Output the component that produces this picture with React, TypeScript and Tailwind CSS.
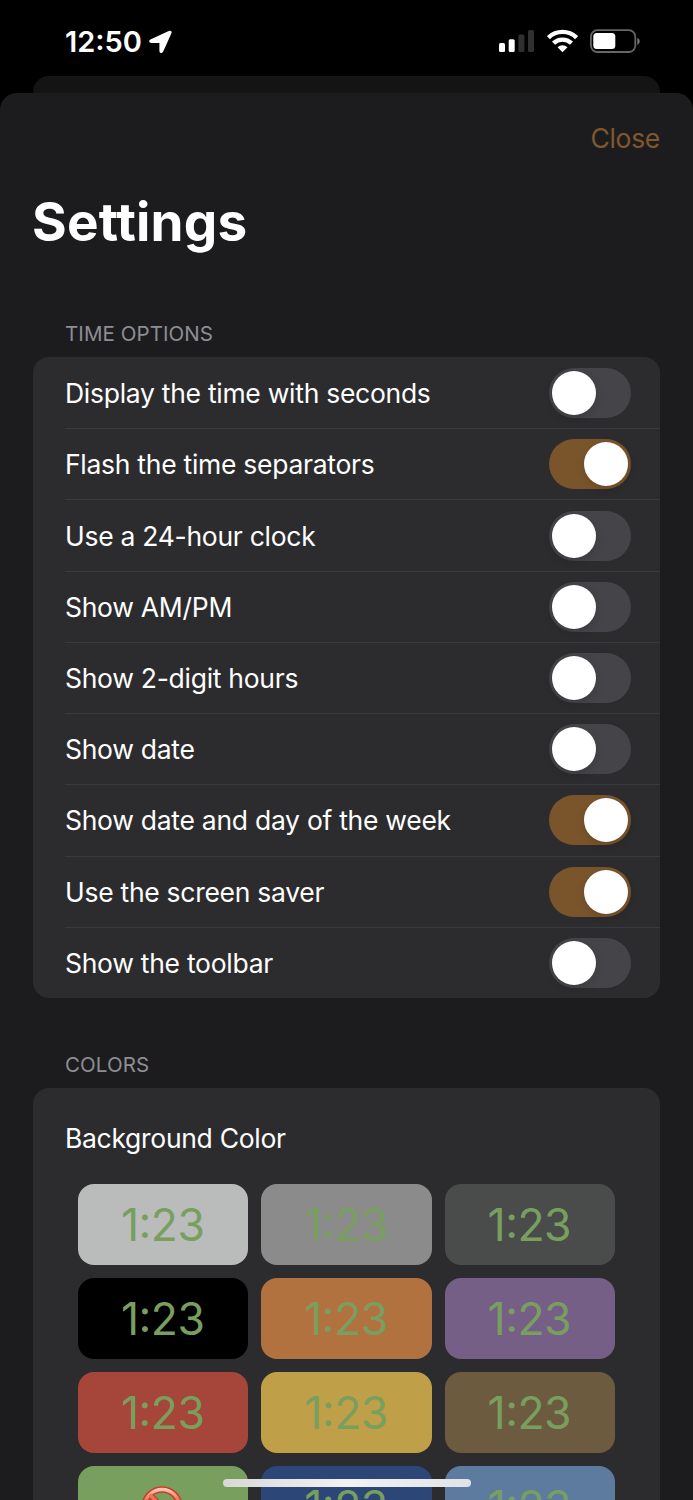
import React from 'react';

const timeOptions = [
  { label: 'Display the time with seconds', on: false },
  { label: 'Flash the time separators', on: true },
  { label: 'Use a 24-hour clock', on: false },
  { label: 'Show AM/PM', on: false },
  { label: 'Show 2-digit hours', on: false },
  { label: 'Show date', on: false },
  { label: 'Show date and day of the week', on: true },
  { label: 'Use the screen saver', on: true },
  { label: 'Show the toolbar', on: false },
];

const swatches = [
  { name: 'silver', color: 'bg-[#babcbb]' },
  { name: 'gray', color: 'bg-[#8b8b8b]' },
  { name: 'graphite', color: 'bg-[#4a4c4b]' },
  { name: 'black', color: 'bg-black' },
  { name: 'orange', color: 'bg-[#b2723f]' },
  { name: 'purple', color: 'bg-[#755f86]' },
  { name: 'red', color: 'bg-[#a64539]' },
  { name: 'yellow', color: 'bg-[#bfa048]' },
  { name: 'brown', color: 'bg-[#6d5b3f]' },
  { name: 'green', color: 'bg-[#799f5f]', disabled: true },
  { name: 'navy', color: 'bg-[#2c4677]' },
  { name: 'blue', color: 'bg-[#5d7b9f]' },
];

function StatusBar() {
  return (
    <div className="flex h-[76px] shrink-0 items-start justify-between pl-[65px] pr-[53px]">
      <div className="flex items-center pt-[24px]">
        <span className="w-[83px] text-[29px] font-semibold leading-[36px] text-white">
          12<span className="inline-block -translate-y-[2px]">:</span>50
        </span>
        <svg width="26" height="26" viewBox="0 0 26 26" className="mt-[-1px]">
          <path
            d="M21.600 2.600 2.700 11.200c-1.200.6-1 2 .4 2h8.300c.5 0 .8.300.8.800v7.900c0 1.500 1.700 1.800 2.300.4L22.700 4c.400-1-.100-1.800-1.100-1.400Z"
            fill="white"
            stroke="white"
            strokeWidth="1.6"
            strokeLinejoin="round"
          />
        </svg>
      </div>
      <div className="flex items-center gap-[12px] pt-[28px]">
        {/* Cellular signal */}
        <svg width="36" height="26" viewBox="0 0 36 26">
          <rect x="0" y="15" width="6" height="9" rx="1.5" fill="white" />
          <rect x="9.700" y="11.300" width="6" height="12.700" rx="1.500" fill="white" />
          <rect x="19.400" y="6.500" width="6" height="17.500" rx="1.500" fill="#303030" />
          <rect x="29" y="2" width="6" height="22" rx="1.5" fill="#303030" />
        </svg>
        {/* Wi-Fi */}
        <svg width="31" height="26" viewBox="0 0 31 26" fill="none" stroke="white" strokeWidth="4.4">
          <path d="M1.400 9.600a20.300 20.300 0 0 1 28.200 0" />
          <path d="M6.500 15.200a13 13 0 0 1 18 0" />
          <path d="M15.500 24.200 10.500 19.200a7.200 7.200 0 0 1 10 0Z" fill="white" stroke="none" />
        </svg>
        {/* Battery */}
        <svg width="50" height="26" viewBox="0 0 50 26">
          <rect x="0.900" y="2.200" width="44.400" height="21.800" rx="6.500" fill="none" stroke="#666" strokeWidth="1.800" />
          <rect x="3.300" y="4.900" width="22" height="16.200" rx="3.500" fill="white" />
          <path d="M47.300 9.700c3.200 1.400 3.200 5.800 0 7.200Z" fill="#777" />
        </svg>
      </div>
    </div>
  );
}

function Toggle({ on }: { on: boolean }) {
  return (
    <div
      className={
        on
          ? 'flex h-[50px] w-[82px] items-center justify-end rounded-full bg-[#7a552c] px-[3px]'
          : 'flex h-[50px] w-[82px] items-center rounded-full bg-[#454449] px-[3px]'
      }
    >
      <div className="h-[44px] w-[44px] rounded-full bg-white shadow-[0_3px_8px_rgba(0,0,0,0.15)]" />
    </div>
  );
}

function SectionTitle({ children }: { children: React.ReactNode }) {
  return (
    <h2 className="pl-[32px] text-[20.5px] leading-[28px] tracking-[0.08px] text-[#8e8e93]">{children}</h2>
  );
}

export default function App() {
  return (
    <div className="relative flex h-[1500px] w-[693px] flex-col overflow-hidden bg-black font-['Inter',sans-serif] text-white">
      <StatusBar />

      {/* Edge of the screen behind the sheet */}
      <div className="mx-[33px] h-[17px] shrink-0 rounded-t-[16px] bg-[#141414]" />

      <main className="flex flex-1 flex-col rounded-t-[17px] bg-[#1c1c1e] px-[33px]">
        <div className="flex justify-end pt-[27px]">
          <button className="text-[26.5px] leading-[36px] tracking-[-0.3px] text-[#7f582f]">Close</button>
        </div>

        <h1 className="mt-[32px] ml-[-1px] text-[53px] font-bold leading-[68px] tracking-[0.2px]">Settings</h1>

        <section className="mt-[64px]">
          <SectionTitle>TIME OPTIONS</SectionTitle>
          <div className="mt-[9px] rounded-[16px] bg-[#2c2c2e] pl-[32px]">
            {timeOptions.map((option, i) => (
              <div
                key={option.label}
                className={
                  i > 0
                    ? 'flex h-[71.22px] items-center justify-between border-t border-[#3a3a3c] pr-[29px]'
                    : 'flex h-[71.22px] items-center justify-between pr-[29px]'
                }
              >
                <span className="text-[26.5px] leading-[36px] tracking-[-0.28px]">{option.label}</span>
                <Toggle on={option.on} />
              </div>
            ))}
          </div>
        </section>

        <section className="mt-[53px]">
          <SectionTitle>COLORS</SectionTitle>
          <div className="mt-[9px] rounded-t-[16px] bg-[#2c2c2e] px-[32px] pt-[32px]">
            <h3 className="text-[26.5px] leading-[36px] tracking-[-0.3px]">Background Color</h3>
            <div className="mt-[28px] grid grid-cols-3 gap-[13px] pl-[13px] pr-[13px]">
              {swatches.map((swatch) => (
                <div
                  key={swatch.name}
                  className={`flex h-[81px] items-center justify-center rounded-[16px] ${swatch.color}`}
                >
                  {swatch.disabled ? (
                    <svg width="44" height="44" viewBox="0 0 44 44" className="mt-[1px] mr-[2px]">
                      <defs>
                        <linearGradient id="ban" x1="0" y1="0" x2="0" y2="1">
                          <stop offset="0" stopColor="#f8c4b6" />
                          <stop offset="0.3" stopColor="#e87660" />
                          <stop offset="1" stopColor="#c42a12" />
                        </linearGradient>
                      </defs>
                      <circle cx="22" cy="22" r="17.500" fill="none" stroke="#d03c20" strokeWidth="6.500" />
                      <path d="M9.600 9.600 34.400 34.400" stroke="#d03c20" strokeWidth="6" />
                      <circle cx="22" cy="22" r="17.500" fill="none" stroke="url(#ban)" strokeWidth="3.500" />
                      <path d="M9.600 9.600 34.400 34.400" stroke="#e87660" strokeWidth="3.500" />
                    </svg>
                  ) : (
                    <span className="mr-[1px] mt-[2px] text-[44.5px] font-normal leading-[54px] tracking-[-0.5px] text-[#799f5f]">
                      1<span className="inline-block -translate-y-[3px]">:</span>23
                    </span>
                  )}
                </div>
              ))}
            </div>
          </div>
        </section>
      </main>

      {/* Home indicator */}
      <div className="absolute left-[223px] top-[1479px] h-[8px] w-[248px] rounded-full bg-gradient-to-r from-[#d8d8d8] via-[#f2f2f2] to-[#e0e3e6]" />
    </div>
  );
}
